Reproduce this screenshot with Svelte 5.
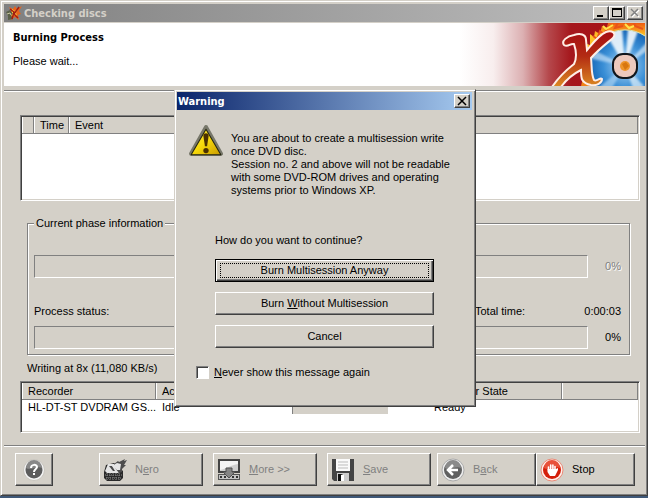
<script lang="ts">
  const phaseProgress = 0;
  const totalProgress = 0;
  const writeOnceText = 'You are about to create a multisession write once DVD disc.';
  const sessionText =
    'Session no. 2 and above will not be readable with some DVD-ROM drives and operating systems prior to Windows XP.';

  let neverShow = false;
</script>

<div class="desktop">
  <main class="window">
    <header class="titlebar inactive">
      <svg class="app-icon" viewBox="0 0 16 16">
        <path d="M3 2l4 2 2-3 2 3 5-3-3 5 2 3-3 1 1 5-4-3-4 3 0-5-3-2 3-2z" fill="#e8641c" />
        <path d="M6 4l3 2 3-2-2 4 1 3-3-1-3 2 1-4z" fill="#ffd23c" />
        <path d="M0 7l4-2 3 4-2 1 2 4-5 1 0-4z" fill="#5a6048" />
        <path d="M1 9l3-1 1 2" stroke="#c8c8a0" fill="none" />
        <path d="M4 4l4 3-2 7M13 2l-5 7 4 4" stroke="#a41c10" stroke-width="1.5" fill="none" />
      </svg>
      <h1>Checking discs</h1>
      <div class="captions">
        <button class="caption" aria-label="Minimize">
          <svg viewBox="0 0 12 10"><path d="M2 7h6v2h-6z" /></svg>
        </button>
        <button class="caption" aria-label="Maximize">
          <svg viewBox="0 0 12 10"><path d="M1 0h10v9H1zM2 2v6h8V2z" fill-rule="evenodd" /></svg>
        </button>
        <button class="caption close" aria-label="Close" disabled>
          <svg viewBox="0 0 12 10">
            <path d="M3 2l7 7M10 2L3 9" stroke="#fff" stroke-width="1.5" />
            <path d="M2 1l7 7M9 1L2 8" stroke="#808080" stroke-width="1.5" />
          </svg>
        </button>
      </div>
    </header>

    <section class="banner">
      <div class="banner-text">
        <h2>Burning Process</h2>
        <p>Please wait...</p>
      </div>
      <svg class="banner-art" viewBox="0 0 185 63">
        <defs>
          <linearGradient id="red">
            <stop offset="0" stop-color="#fff" />
            <stop offset="0.18" stop-color="#f8eeee" />
            <stop offset="0.34" stop-color="#dcb0b2" />
            <stop offset="0.48" stop-color="#b5484c" />
            <stop offset="0.6" stop-color="#a5171c" />
            <stop offset="1" stop-color="#a80f14" />
          </linearGradient>
          <linearGradient id="letter" x1="0" y1="0" x2="0" y2="1">
            <stop offset="0" stop-color="#a60e12" />
            <stop offset="0.45" stop-color="#b32c13" />
            <stop offset="1" stop-color="#dc8a22" />
          </linearGradient>
          <linearGradient id="fire" x1="0" y1="0" x2="0" y2="1">
            <stop offset="0" stop-color="#ee5a10" />
            <stop offset="0.2" stop-color="#ffc928" />
            <stop offset="1" stop-color="#f08018" />
          </linearGradient>
          <radialGradient id="disc">
            <stop offset="0.2" stop-color="#8cc0ea" />
            <stop offset="0.6" stop-color="#3a8fd6" />
            <stop offset="1" stop-color="#1766b6" />
          </radialGradient>
          <filter id="soft"><feGaussianBlur stdDeviation="1" /></filter>
          <clipPath id="disc-clip"><circle cx="165" cy="43" r="36" /></clipPath>
        </defs>
        <rect width="185" height="63" fill="url(#red)" />
        <path d="M121 63l5-20 1-22 3 1 0-11 4 3 1-6 5 3 2-8 5 2 1-5h37v63z" fill="url(#fire)" />
        <path d="M133 13l4 3 3-8 4 3 5-9M158 0l-3 5 8-2M174 0l1 3 8 3" stroke="#e8541a" stroke-width="2" fill="none" />
        <path d="M143 3l3 3 7-4M165 1l4 4 5-2" stroke="#ffe34a" stroke-width="2" fill="none" />
        <circle cx="165" cy="43" r="36" fill="url(#disc)" />
        <g clip-path="url(#disc-clip)" filter="url(#soft)">
          <path d="M165 43L144 8l18-4zM165 43l3-38 10 3z" fill="#f2f8fd" opacity="0.9" />
          <path d="M165 43l22-24v9z" fill="#d6eafa" opacity="0.7" />
          <path d="M165 43l-37-8 2-10z" fill="#c5e0f6" opacity="0.7" />
          <path d="M165 43l-27 22h14z" fill="#a9d3f2" opacity="0.7" />
          <path d="M165 43l9 25 10-5z" fill="#e5f3fc" opacity="0.7" />
        </g>
        <path d="M145 13a36 36 0 0 1 40 0" fill="none" stroke="#dfe6b4" />
        <rect x="153" y="31" width="24" height="24" rx="10" fill="#ecc9bd" stroke="#10161c" stroke-width="2" />
        <circle cx="165" cy="43" r="5" fill="#ee9429" />
        <path d="M162 41l4-2 3 4-4 4z" fill="#d8760f" />
        <path
          d="M92 64C98 55 105 48 114 41C117 35 116 27 114 21C110 20 108 25 104 22C101 18 107 13 114 12C120 10 126 11 126 17L127 27C133 20 139 12 146 9C152 7 157 10 153 15C146 21 138 27 131 35C132 43 131 51 134 57C137 59 140 54 142 56C142 60 137 63 131 62C121 60 121 55 121 47C113 51 106 57 101 64Z"
          fill="url(#letter)"
          stroke="#ffeee6"
          stroke-width="2"
        />
      </svg>
    </section>

    <div class="content">
      <div class="listview events">
        <table>
          <colgroup><col class="c-icon" /><col class="c-time" /><col /></colgroup>
          <thead>
            <tr><th></th><th>Time</th><th>Event</th></tr>
          </thead>
        </table>
      </div>

      <fieldset>
        <legend>Current phase information</legend>
        <div class="progress-row">
          <div class="progress"><div class="fill" style="width: {phaseProgress}%"></div></div>
          <span class="percent off">{phaseProgress}%</span>
        </div>
        <div class="status-row">
          <span>Process status:</span>
          <span class="total-label">Total time:</span>
          <span class="total-time">0:00:03</span>
        </div>
        <div class="progress-row">
          <div class="progress"><div class="fill" style="width: {totalProgress}%"></div></div>
          <span class="percent">{totalProgress}%</span>
        </div>
      </fieldset>

      <p class="speed">Writing at 8x (11,080 KB/s)</p>

      <div class="listview recorders">
        <table>
          <colgroup>
            <col class="c-recorder" /><col class="c-action" /><col class="c-buffer" /><col class="c-state" /><col />
          </colgroup>
          <thead>
            <tr><th>Recorder</th><th>Action</th><th>Buffer Level</th><th>Recorder State</th><th></th></tr>
          </thead>
          <tbody>
            <tr>
              <td>HL-DT-ST DVDRAM GS...</td>
              <td>Idle</td>
              <td class="level"><div class="buffer"></div></td>
              <td>Ready</td>
              <td></td>
            </tr>
          </tbody>
        </table>
      </div>
    </div>

    <footer>
      <button class="tool help" aria-label="Help">
        <svg viewBox="0 0 24 24">
          <circle cx="12" cy="12" r="10.5" fill="#f4f4f4" stroke="#c8c5be" />
          <circle cx="12" cy="12" r="8.5" fill="#5c5c5c" />
          <path d="M4 10a8 8 0 0 1 16 0c-5-3-11 3-16 0z" fill="#888" />
          <path d="M9 10c0-4 6-4 6-1 0 2-3 2-3 5" stroke="#fff" stroke-width="2" fill="none" />
          <path d="M11 15h2v2h-2z" fill="#fff" />
        </svg>
      </button>
      <button class="tool" disabled>
        <svg viewBox="0 0 24 24">
          <path d="M1 14l2-7 8-2 9 8v7l-3 3H4l-3-3z" fill="#292929" />
          <path d="M2 13l3-7 6 0 7 7-3 2H4z" fill="#e4e4e4" />
          <path d="M6 8l3 0 3 5-2 0z" fill="#4b4b4b" />
          <path d="M11 6l4-3 1 1 6-3-1 2 3-1-3 5 2 0-4 4 0 3-3 1-4-5z" fill="#4c4c4c" />
          <path d="M9 8l5-3 4 1-1 6-3 0z" fill="#e6e6e6" />
          <path d="M2 17h17M3 20h15M4 15v7M7 15v7M10 15v7M13 15v7M16 15v7" stroke="#8b8b8b" stroke-dasharray="1 1" />
        </svg>
        <span>N<u>e</u>ro</span>
      </button>
      <button class="tool" disabled>
        <svg viewBox="0 0 24 24">
          <path d="M1 1h22v14H1z" fill="#444" />
          <path d="M3 3h18v10H3z" fill="#d0d0d0" />
          <path d="M3 3h18v3c-7 1-12 5-18 6z" fill="#f4f4f4" />
          <path d="M1 16h22v6H1z" fill="#555" />
          <path d="M2 17h20v4H2z" fill="#c4c4c4" />
          <path d="M3 18h2v2H3zM7 18h2v2H7zM15 18h2v2h-2zM19 18h2v2h-2z" fill="#333" />
          <path d="M9 10h6v4h3l-6 6-6-6h3z" fill="#858585" stroke="#505050" />
        </svg>
        <span><u>M</u>ore &gt;&gt;</span>
      </button>
      <button class="tool save" disabled>
        <svg viewBox="0 0 24 24">
          <path d="M1 1h22v22H3l-2-2z" fill="#444" />
          <path d="M5 1h14v12H5z" fill="#fafafa" />
          <path d="M7 4h10M7 7h10M7 10h10" stroke="#bbb" />
          <path d="M6 15h12v8H6z" fill="#ccc" />
          <path d="M7 16h6v7H7z" fill="#111" />
          <path d="M10 17l3-1v7h-3z" fill="#fff" />
        </svg>
        <span><u>S</u>ave</span>
      </button>
      <button class="tool back" disabled>
        <svg viewBox="0 0 24 24">
          <circle cx="12" cy="12" r="11" fill="#eee" stroke="#aaa" />
          <circle cx="12" cy="12" r="9" fill="#606060" />
          <path d="M4 10a8 8 0 0 1 16 0c-5-3-11 3-16 0z" fill="#8a8a8a" />
          <path d="M17 12H8M12 7l-5 5 5 5" stroke="#fff" stroke-width="2.5" fill="none" />
        </svg>
        <span>B<u>a</u>ck</span>
      </button>
      <button class="tool stop">
        <svg viewBox="0 0 24 24">
          <circle cx="12" cy="12" r="11" fill="#fff0ec" stroke="#e98b78" />
          <circle cx="12" cy="12" r="9" fill="#d41e0a" />
          <path d="M4 10a8 8 0 0 1 16 0c-5-3-11 3-16 0z" fill="#e8513a" />
          <path d="M8.5 12V9M10.700 12V7M12.900 12V7M15 13V8.500" stroke="#fff" stroke-width="1.600" stroke-linecap="round" />
          <path d="M7.500 11h8.500l2-1v2l-3 6h-5l-2.500-4z" fill="#fff" />
        </svg>
        <span>Stop</span>
      </button>
    </footer>
  </main>

  <div class="overlay">
    <div class="dialog" role="alertdialog" aria-labelledby="warning-title">
      <div class="titlebar active">
        <h2 id="warning-title">Warning</h2>
        <button class="caption" aria-label="Close">
          <svg viewBox="0 0 12 10"><path d="M2 1l8 8M10 1L2 9" stroke="#000" stroke-width="1.5" /></svg>
        </button>
      </div>

      <div class="message">
        <svg viewBox="0 0 32 32">
          <defs>
            <linearGradient id="sign" x1="0" y1="0" x2="1" y2="1">
              <stop offset="0" stop-color="#fff04a" />
              <stop offset="0.5" stop-color="#f6d80a" />
              <stop offset="1" stop-color="#c99a00" />
            </linearGradient>
          </defs>
          <path d="M16 3L30 28H2z" fill="#77776a" stroke="#77776a" stroke-width="4" stroke-linejoin="round" />
          <path d="M16 5L30 29H2z" fill="url(#sign)" stroke="#252510" stroke-linejoin="round" />
          <path d="M13.500 11c0-3 5-3 5 0l-1.500 10h-2z" fill="#4a3000" />
          <circle cx="16" cy="25" r="2.500" fill="#4a3000" />
        </svg>
        <div class="message-text">
          <p>{writeOnceText}</p>
          <p>{sessionText}</p>
        </div>
      </div>

      <p class="question">How do you want to continue?</p>

      <div class="choices">
        <button class="choice default"><span>Burn Multisession Anyway</span></button>
        <button class="choice">Burn <u>W</u>ithout Multisession</button>
        <button class="choice">Cancel</button>
      </div>

      <label class="never">
        <input type="checkbox" bind:checked={neverShow} />
        <span><u>N</u>ever show this message again</span>
      </label>
    </div>
  </div>
</div>

<style>
  :global(body) {
    margin: 0;
    background: #3f5878;
  }

  .desktop {
    position: relative;
    padding-bottom: 2px;
    font-family: "Liberation Sans", Arial, sans-serif;
    font-size: 11px;
    line-height: 13px;
    color: #000;
  }

  .desktop * {
    box-sizing: border-box;
  }

  h1,
  h2,
  p {
    margin: 0;
    font-size: 11px;
    font-weight: normal;
  }

  button {
    font: inherit;
    color: #000;
    background: #d4d0c8;
    border: 1px solid;
    border-color: #fff #404040 #404040 #fff;
    box-shadow: inset -1px -1px #808080;
    border-radius: 0;
    padding: 0;
  }

  button:disabled {
    color: #808080;
  }

  .window,
  .dialog {
    background: #d4d0c8;
    border: 1px solid;
    border-color: #d4d0c8 #404040 #404040 #d4d0c8;
    box-shadow: inset 1px 1px #fff, inset -1px -1px #808080;
  }

  .window {
    padding: 3px 2px 9px 3px;
  }

  .titlebar {
    display: flex;
    align-items: center;
    height: 18px;
    padding-right: 2px;
    font-family: "DejaVu Sans Condensed", "DejaVu Sans", sans-serif;
  }

  .titlebar h1,
  .titlebar h2 {
    flex: 1;
    font-size: 11px;
    font-weight: bold;
  }

  .inactive {
    background: linear-gradient(to right, #808080, #c0c0c0);
    color: #d4d0c8;
    margin-bottom: 1px;
  }

  .active {
    background: linear-gradient(to right, #0a246a, #a6caf0);
    color: #fff;
    padding-left: 1px;
  }

  .app-icon {
    width: 16px;
    height: 16px;
    margin: 0 2px;
  }

  .captions {
    display: flex;
  }

  .caption {
    width: 16px;
    height: 14px;
    display: flex;
    align-items: center;
    justify-content: center;
  }

  .caption svg {
    width: 12px;
    height: 10px;
  }

  .caption.close {
    margin-left: 2px;
  }

  .banner {
    display: flex;
    justify-content: space-between;
    height: 63px;
    background: #fff;
  }

  .banner-text {
    padding: 8px 9px;
  }

  .banner-text h2 {
    font-family: "DejaVu Sans Condensed", "DejaVu Sans", sans-serif;
    font-weight: bold;
    margin-bottom: 11px;
  }

  .banner-art {
    width: 185px;
    height: 63px;
  }

  .content {
    margin-top: 4px;
    padding: 24px 5px 12px 16px;
    border-top: 1px solid #808080;
    box-shadow: inset 0 1px #fff;
  }

  .listview {
    background: #fff;
    border: 1px solid;
    border-color: #808080 #fff #fff #808080;
    box-shadow: inset 1px 1px #404040, inset -1px -1px #d4d0c8;
    padding: 1px;
  }

  .events {
    height: 86px;
  }

  .recorders {
    height: 52px;
  }

  table {
    width: 100%;
    table-layout: fixed;
    border-collapse: separate;
    border-spacing: 0;
  }

  th,
  td {
    padding: 0 6px;
    text-align: left;
    font-weight: normal;
    white-space: nowrap;
    overflow: hidden;
  }

  th {
    height: 17px;
    background: #d4d0c8;
    border-right: 1px solid #808080;
    border-bottom: 1px solid #808080;
    box-shadow: inset 1px 0 #fff;
  }

  td {
    height: 15px;
  }

  .level {
    padding: 0 2px;
  }

  .buffer {
    width: 96px;
    height: 13px;
    background: #d4d0c8;
    border-left: 1px solid #808080;
  }

  .c-icon {
    width: 12px;
  }

  .c-time {
    width: 35px;
  }

  .c-recorder,
  .c-action,
  .c-state {
    width: 134px;
  }

  .c-buffer {
    width: 138px;
  }

  fieldset {
    margin: 16px 10px 0 7px;
    padding: 25px 8px 5px 6px;
    border: 1px solid #808080;
    box-shadow: 1px 1px #fff, inset 1px 1px #fff;
  }

  legend {
    padding: 0 2px;
    background: #d4d0c8;
  }

  .progress-row {
    display: flex;
    align-items: center;
  }

  .progress {
    flex: 1;
    height: 23px;
    border: 1px solid;
    border-color: #808080 #fff #fff #808080;
  }

  .fill {
    height: 100%;
    background: #0a246a;
  }

  .percent {
    width: 33px;
    text-align: right;
  }

  .off {
    color: #808080;
    text-shadow: 1px 1px #fff;
  }

  .status-row {
    display: flex;
    padding: 27px 0 8px;
  }

  .total-label {
    margin-left: auto;
    width: 80px;
  }

  .total-time {
    width: 66px;
    text-align: right;
  }

  .speed {
    padding: 7px 7px 6px;
  }

  footer {
    display: flex;
    padding: 7px 10px 0 11px;
    border-top: 1px solid #808080;
    box-shadow: inset 0 1px #fff;
  }

  .tool {
    display: flex;
    align-items: center;
    gap: 8px;
    width: 104px;
    height: 33px;
    padding-left: 3px;
    margin-right: 10px;
    text-align: left;
  }

  .tool svg {
    flex: none;
    width: 24px;
    height: 24px;
  }

  .tool.help {
    width: 38px;
    padding-left: 6px;
    margin-right: auto;
  }

  .tool.save {
    margin-right: 6px;
  }

  .tool.back,
  .tool.stop {
    width: 99px;
    margin-right: 0;
  }

  .overlay {
    position: absolute;
    inset: 0;
    display: flex;
    justify-content: center;
    align-items: flex-start;
    padding: 89px 0 0 2px;
  }

  .dialog {
    width: 302px;
    padding: 2px 3px 27px 2px;
  }

  .message {
    display: flex;
    gap: 8px;
    padding: 14px 12px 0;
  }

  .message svg {
    flex: none;
    width: 34px;
    height: 34px;
  }

  .message-text {
    width: 220px;
    padding-top: 8px;
  }

  .question {
    margin: 37px 38px 12px;
  }

  .choices {
    display: flex;
    flex-direction: column;
    gap: 10px;
    padding: 0 38px;
  }

  .choice {
    height: 23px;
  }

  .default {
    border-color: #000;
    box-shadow: inset 1px 1px #fff, inset -1px -1px #404040, inset -2px -2px #808080;
    padding: 3px 4px;
  }

  .default span {
    display: block;
    border: 1px dotted #000;
  }

  .never {
    display: flex;
    align-items: center;
    gap: 5px;
    margin: 18px 19px 0;
  }

  .never input {
    appearance: none;
    width: 13px;
    height: 13px;
    margin: 0;
    background: #fff;
    border: 1px solid;
    border-color: #808080 #fff #fff #808080;
    box-shadow: inset 1px 1px #404040;
  }

  .never input:checked {
    background: #0a246a;
  }
</style>
